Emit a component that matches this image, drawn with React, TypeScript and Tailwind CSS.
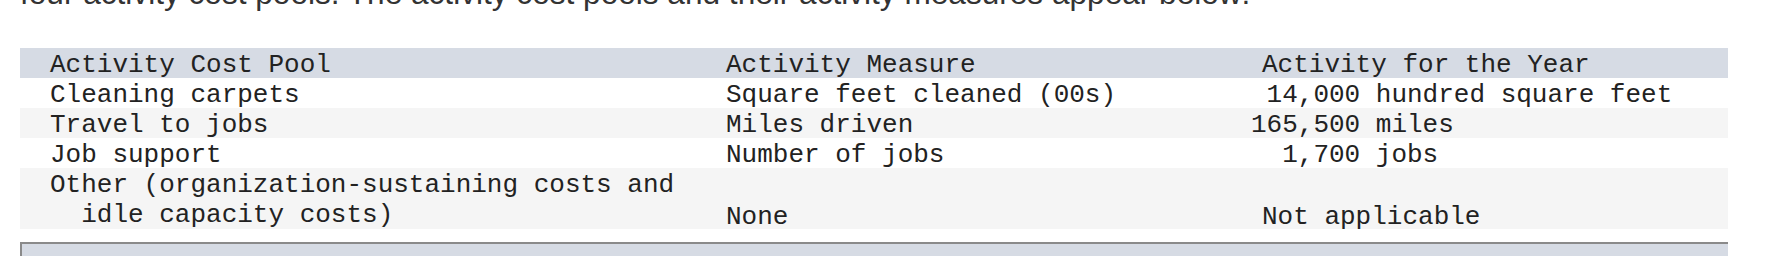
import React from "react";

const mono = "font-['Liberation_Mono','Courier_New',monospace]";

type Row = { a: React.ReactNode; b: string; c: React.ReactNode; bg: string };

function Num({ n, unit }: { n: string; unit: string }) {
  return (
    <span className="whitespace-pre">
      <span className="inline-block w-[7ch] text-right">{n}</span> {unit}
    </span>
  );
}

export default function App() {
  const rows: Row[] = [
    { a: "Cleaning carpets", b: "Square feet cleaned (00s)", c: <Num n="14,000" unit="hundred square feet" />, bg: "bg-white" },
    { a: "Travel to jobs", b: "Miles driven", c: <Num n="165,500" unit="miles" />, bg: "bg-[#f5f5f5]" },
    { a: "Job support", b: "Number of jobs", c: <Num n="1,700" unit="jobs" />, bg: "bg-white" },
  ];
  return (
    <div className="w-[1784px] h-[276px] bg-white overflow-hidden text-[#222]">
      <div className="pl-[20px] w-[1728px]">
        <p className="-mt-[25px] h-[36px] text-[31.6px] leading-[36px] font-['Liberation_Sans',Arial,sans-serif] text-[#333] whitespace-nowrap">
          four activity cost pools. The activity cost pools and their activity measures appear below:
        </p>
        <div className={`mt-[37px] ${mono} text-[26px] leading-[30px]`}>
          <div className="grid grid-cols-[706px_525px_1fr] bg-[#d6dbe4] h-[30px]">
            <div className="pl-[30px] pt-[2px]">Activity Cost Pool</div>
            <div className="pt-[2px]">Activity Measure</div>
            <div className="pl-[11px] pt-[2px]">Activity for the Year</div>
          </div>
          {rows.map((r, i) => (
            <div key={i} className={`grid grid-cols-[706px_525px_1fr] ${r.bg} h-[30px]`}>
              <div className="pl-[30px] pt-[2px] whitespace-pre">{r.a}</div>
              <div className="pt-[2px] whitespace-pre">{r.b}</div>
              <div className="pt-[2px]">{r.c}</div>
            </div>
          ))}
          <div className="grid grid-cols-[706px_525px_1fr] bg-[#f5f5f5] h-[61px]">
            <div className="pl-[30px] pt-[2px]">
              <div className="whitespace-pre">Other (organization-sustaining costs and</div>
              <div className="whitespace-pre pl-[2ch]">idle capacity costs)</div>
            </div>
            <div className="flex flex-col justify-end">
              <span className="relative top-[2px]">None</span>
            </div>
            <div className="flex flex-col justify-end pl-[11px]">
              <span className="relative top-[2px]">Not applicable</span>
            </div>
          </div>
        </div>
        <div className="mt-[13px] h-[14px] bg-[#d6dbe4] border-t-2 border-l-2 border-[#8a8a8a]" />
      </div>
    </div>
  );
}
